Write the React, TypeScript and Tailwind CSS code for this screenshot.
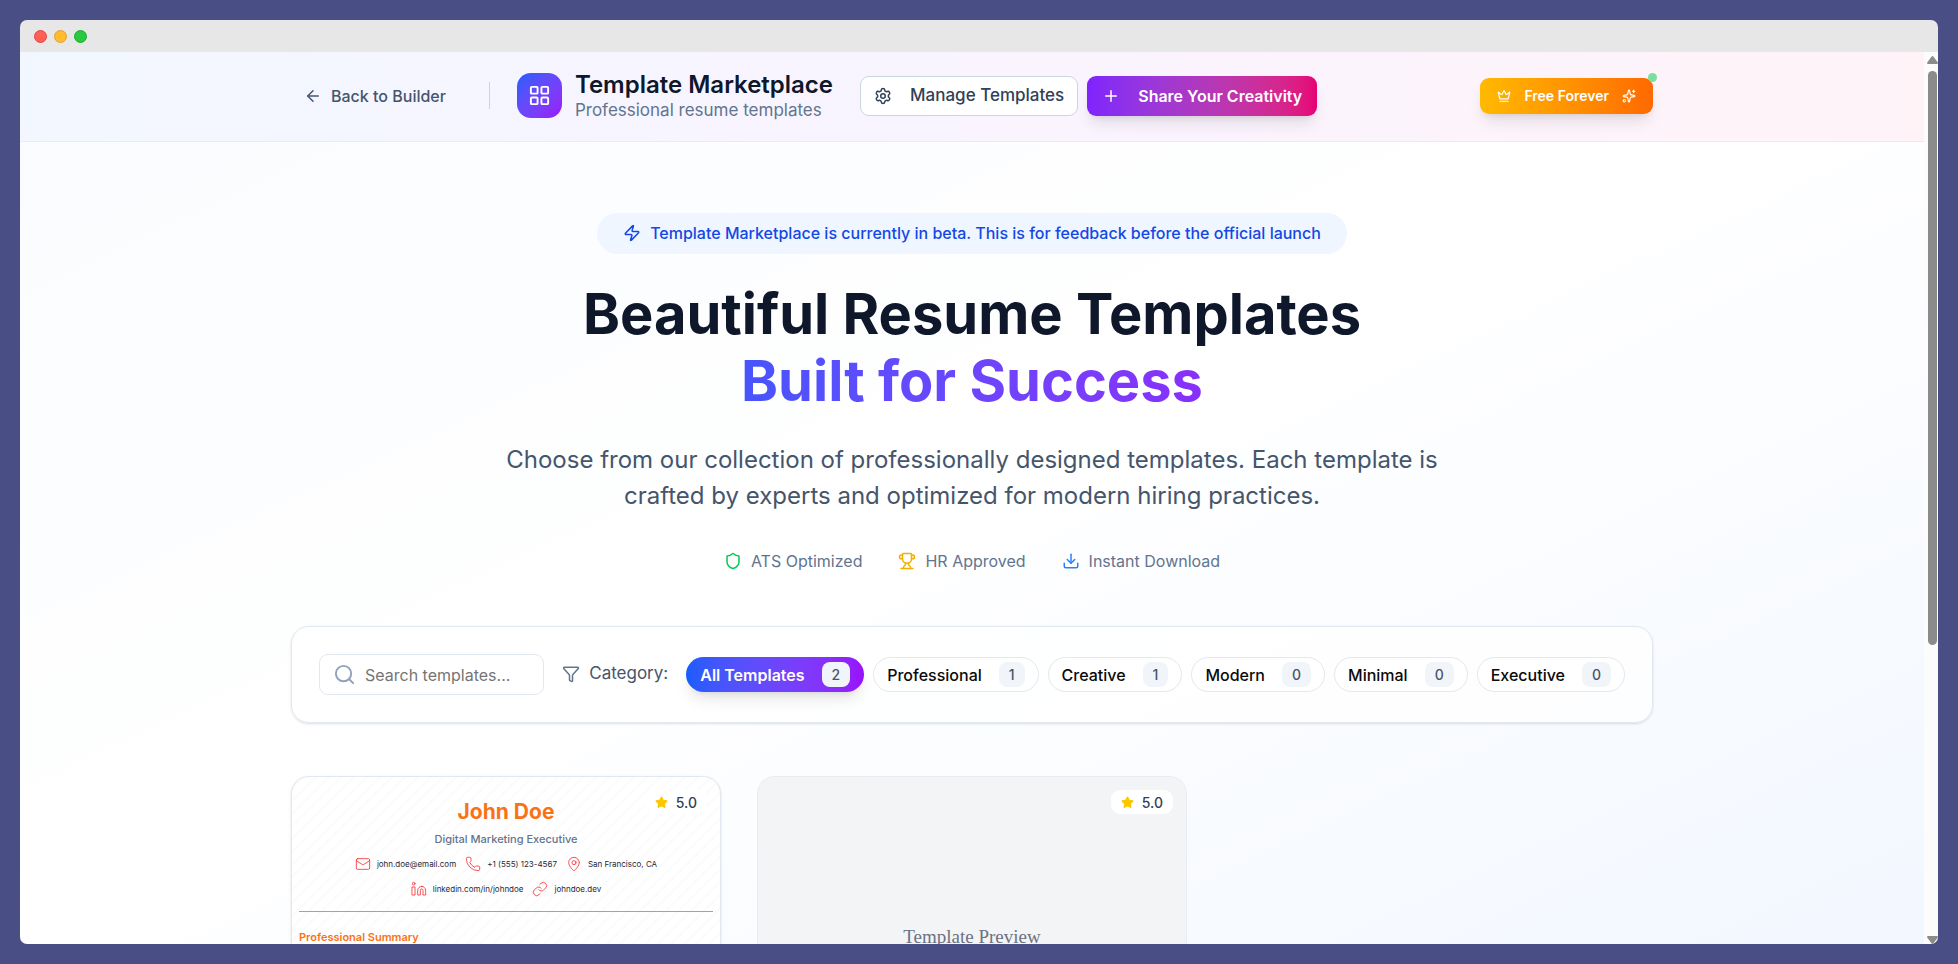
import React from "react";
import {
  ArrowLeft,
  Crown,
  Download,
  Funnel,
  LayoutGrid,
  Link as LinkIcon,
  Linkedin,
  Mail,
  MapPin,
  Phone,
  Plus,
  Search,
  Settings,
  Shield,
  Sparkles,
  Star,
  Trophy,
  Zap,
} from "lucide-react";

const categories = [
  { name: "All Templates", count: 2 },
  { name: "Professional", count: 1 },
  { name: "Creative", count: 1 },
  { name: "Modern", count: 0 },
  { name: "Minimal", count: 0 },
  { name: "Executive", count: 0 },
];

function TitleBar() {
  return (
    <div className="flex h-8 shrink-0 items-center gap-[7px] bg-[#e7e7e7] px-3.5">
      <span className="size-[13px] rounded-full border border-[#e2463f] bg-[#ff5f57]" />
      <span className="size-[13px] rounded-full border border-[#e0a030] bg-[#febc2e]" />
      <span className="size-[13px] rounded-full border border-[#1dad2b] bg-[#28c840]" />
    </div>
  );
}

function Scrollbar() {
  return (
    <div className="flex w-3.5 shrink-0 flex-col items-end bg-[#fcfcfc] pt-1" aria-hidden="true">
      <svg className="h-2 w-[11px]" viewBox="0 0 11 8" fill="#8b8b8b">
        <path d="M4.6.6Q5.5-.4 6.4.6L10.8 6.6Q11.2 8 10 8H1Q-.2 8 .2 6.6Z" />
      </svg>
      <div className="mt-[7px] mr-px h-[574px] w-[9px] shrink rounded-full bg-[#8b8b8b]" />
      <svg className="mt-auto h-2 w-[11px]" viewBox="0 0 11 8" fill="#8b8b8b">
        <path d="M4.6 7.4Q5.5 8.4 6.4 7.4L10.8 1.4Q11.2 0 10 0H1Q-.2 0 .2 1.4Z" />
      </svg>
    </div>
  );
}

function Header() {
  return (
    <header className="border-b border-slate-200/70 bg-linear-to-r from-[#f2f7ff] via-[#f9f4ff] to-[#fff3f8]">
      <div className="mx-auto flex h-[89px] max-w-[1362px] items-center pb-0.5">
        <button className="flex h-10 items-center gap-[9px] px-[13px] text-[16px] font-medium text-slate-600">
          <ArrowLeft size={18} />
          Back to Builder
        </button>
        <div className="mr-[27px] ml-[30px] h-[27px] w-px bg-slate-300" />
        <div className="flex items-center gap-[13px]">
          <div className="flex size-[45px] items-center justify-center rounded-[14px] bg-linear-to-br from-[#155dfc] to-[#9810fa] text-white">
            <LayoutGrid size={23} />
          </div>
          <div>
            <h1 className="text-[24px] leading-7 font-semibold text-slate-900">Template Marketplace</h1>
            <p className="text-[17px] leading-[22px] text-slate-500">Professional resume templates</p>
          </div>
        </div>
        <div className="ml-[27px] flex items-center gap-[9px]">
          <button className="flex h-10 items-center gap-[18px] rounded-[9px] border border-slate-300 bg-white px-[13px] text-[17px] font-medium text-slate-700">
            <Settings size={18} />
            Manage Templates
          </button>
          <button className="flex h-10 items-center gap-[18px] rounded-[9px] bg-linear-to-r from-[#7f22fe] to-[#e60076] px-[15px] text-[16px] font-semibold text-white shadow-lg">
            <Plus size={18} />
            Share Your Creativity
          </button>
        </div>
        <div className="relative ml-auto">
          <button className="flex h-9 items-center gap-[13px] rounded-[9px] bg-linear-to-r from-[#ffb900] to-[#ff6900] px-[17px] text-[14px] font-semibold text-white shadow-lg">
            <Crown size={14} />
            Free Forever
            <Sparkles size={14} />
          </button>
          <span className="absolute -top-[5px] -right-1 size-[9px] rounded-full bg-[#7bdf9f]" />
        </div>
      </div>
    </header>
  );
}

function Hero() {
  return (
    <section className="flex flex-col items-center text-center">
      <div className="flex h-[41px] items-center gap-[9px] rounded-full bg-blue-50 px-[26px] pb-0.5 text-[16px] font-medium text-blue-700">
        <Zap size={18} />
        Template Marketplace is currently in beta. This is for feedback before the official launch
      </div>
      <h2 className="mt-[27px] text-[56px] leading-[67px] font-bold text-slate-900">
        Beautiful Resume Templates
        <span className="block bg-linear-to-r from-[#155dfc] to-[#9810fa] bg-clip-text text-transparent">
          Built for Success
        </span>
      </h2>
      <p className="mt-[27px] max-w-[960px] text-[24px] leading-9 text-slate-600">
        Choose from our collection of professionally designed templates. Each template is crafted by experts and
        optimized for modern hiring practices.
      </p>
      <ul className="mt-9 flex items-center gap-9 text-[16px] leading-[22px] text-slate-500">
        <li className="flex items-center gap-[9px]">
          <Shield size={18} className="text-[#00c950]" />
          ATS Optimized
        </li>
        <li className="flex items-center gap-[9px]">
          <Trophy size={18} className="text-[#f0b100]" />
          HR Approved
        </li>
        <li className="flex items-center gap-[9px]">
          <Download size={18} className="text-[#2b7fff]" />
          Instant Download
        </li>
      </ul>
    </section>
  );
}

function Filters() {
  return (
    <section className="mt-[54px] flex h-[97px] items-center rounded-[18px] border border-slate-200 bg-white/80 px-[27px] shadow-sm">
      <label className="flex h-[41px] min-w-0 flex-1 items-center gap-[9px] rounded-[9px] border border-slate-200 bg-white px-[13px]">
        <Search size={23} className="shrink-0 text-slate-400" />
        <input
          type="text"
          aria-label="Search templates"
          placeholder="Search templates..."
          className="h-7 w-full min-w-0 bg-transparent text-[16px] outline-none placeholder:text-[#757575]"
        />
      </label>
      <div className="ml-[18px] flex items-center gap-[9px] pb-0.5 text-[17px] text-slate-600">
        <Funnel size={18} className="text-slate-500" />
        Category:
      </div>
      <div className="ml-[18px] flex items-center gap-[9px]">
        {categories.map((category, index) => (
          <button
            key={category.name}
            className={
              index === 0
                ? "flex h-[35px] items-center gap-[17px] rounded-full bg-linear-to-r from-[#155dfc] to-[#9810fa] px-3.5 text-[16px] font-semibold text-white shadow-lg"
                : "flex h-[35px] items-center gap-[17px] rounded-full border border-slate-200 bg-white px-[13px] text-[16px] font-medium text-neutral-950"
            }
          >
            {category.name}
            <span className="flex h-[25px] items-center rounded-lg bg-slate-100 px-2.5 text-[14px] font-medium text-slate-600">
              {category.count}
            </span>
          </button>
        ))}
      </div>
    </section>
  );
}

function Rating() {
  return (
    <div className="absolute top-[13px] right-[13px] flex h-6 items-center gap-2 rounded-[9px] bg-white/95 px-2.5 text-[14px] font-medium text-slate-700">
      <Star size={13} className="fill-[#fdc700] text-[#fdc700]" />
      5.0
    </div>
  );
}

function Contact({ icon: Icon, text }: { icon: React.ElementType; text: string }) {
  return (
    <span className="flex items-center gap-1.5">
      <Icon size={16} strokeWidth={1.25} className="text-red-500" />
      {text}
    </span>
  );
}

function ResumeCard() {
  return (
    <article className="relative h-[560px] overflow-hidden rounded-[18px] border border-slate-200 bg-white bg-[repeating-linear-gradient(135deg,transparent_0_7px,#fbfbfb_7px_9px)] px-[7px] pt-5 shadow-sm">
      <Rating />
      <div className="flex flex-col items-center border-b border-[#fb8a3c] pb-[13px] text-[8px] text-gray-800">
        <h3 className="text-[21px] leading-[30px] font-bold text-[#f97316]">John Doe</h3>
        <p className="mt-1 text-[11px] leading-4 font-medium text-slate-500">Digital Marketing Executive</p>
        <div className="mt-2 flex h-[18px] items-center gap-[9px]">
          <Contact icon={Mail} text="john.doe@email.com" />
          <Contact icon={Phone} text="+1 (555) 123-4567" />
          <Contact icon={MapPin} text="San Francisco, CA" />
        </div>
        <div className="mt-[7px] flex h-[18px] items-center gap-[9px]">
          <Contact icon={Linkedin} text="linkedin.com/in/johndoe" />
          <Contact icon={LinkIcon} text="johndoe.dev" />
        </div>
      </div>
      <h4 className="mt-[17px] text-[11px] leading-4 font-semibold text-[#f97316]">Professional Summary</h4>
    </article>
  );
}

function PreviewCard() {
  return (
    <article className="relative flex h-[322px] items-center justify-center rounded-[18px] border border-slate-200/60 bg-gray-100">
      <Rating />
      <p className="font-['Liberation_Serif',serif] text-[19px] text-gray-500">Template Preview</p>
    </article>
  );
}

export default function App() {
  return (
    <div className="flex h-screen flex-col bg-[#494f84] p-5 font-['Inter',sans-serif]">
      <div className="flex min-h-0 flex-1 flex-col overflow-hidden rounded-[7px]">
        <TitleBar />
        <div className="flex min-h-0 flex-1">
          <div className="min-w-0 flex-1 overflow-hidden bg-linear-to-br from-[#f9fbfe] via-white to-[#f2f7ff]">
            <Header />
            <main className="mx-auto max-w-[1362px] pt-[71px]">
              <Hero />
              <Filters />
              <div className="mt-[53px] grid grid-cols-3 items-start gap-9">
                <ResumeCard />
                <PreviewCard />
              </div>
            </main>
          </div>
          <Scrollbar />
        </div>
      </div>
    </div>
  );
}
